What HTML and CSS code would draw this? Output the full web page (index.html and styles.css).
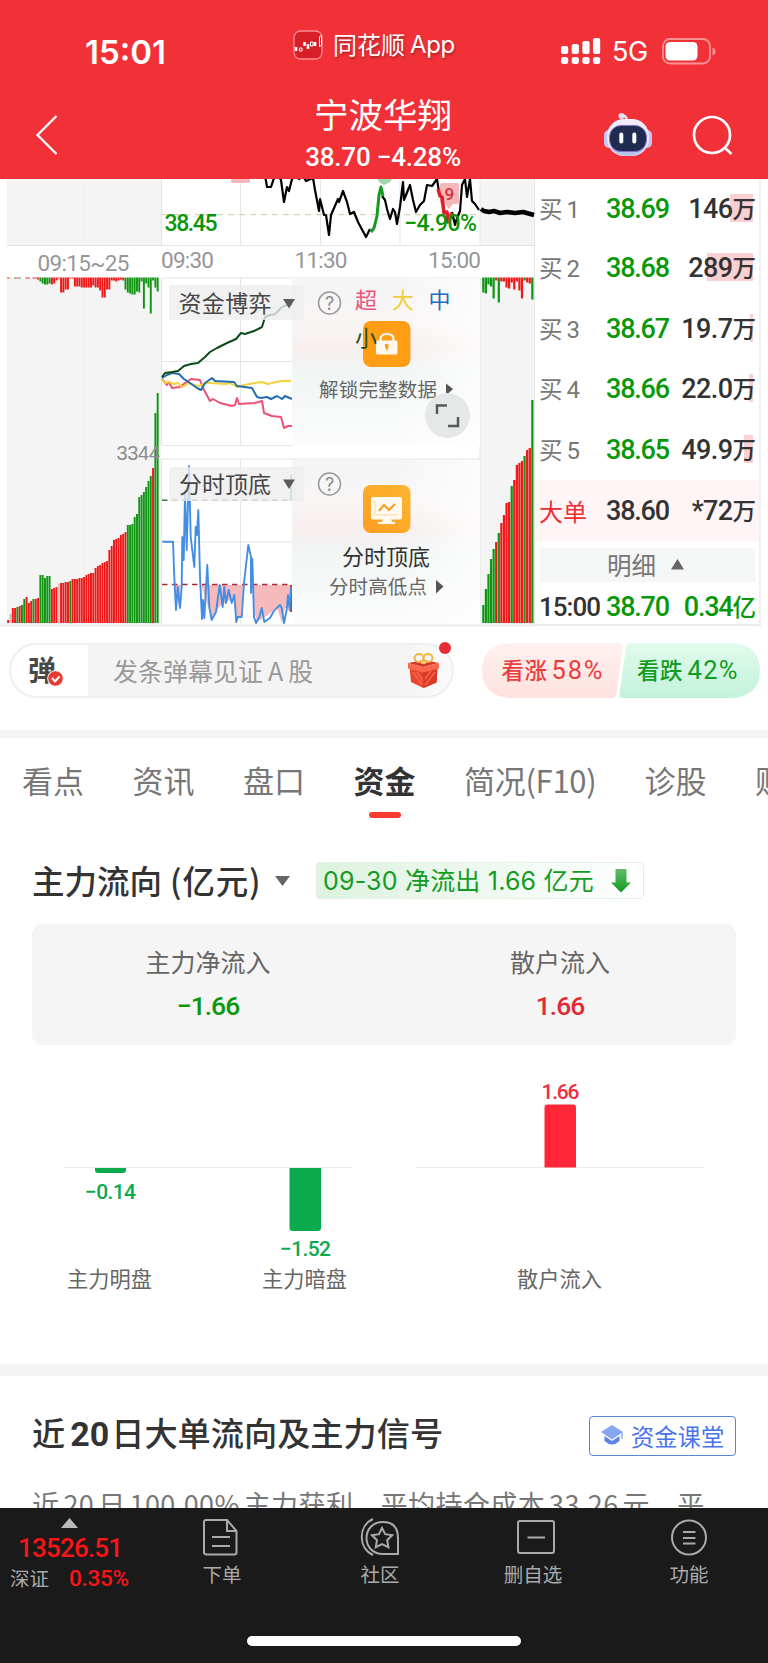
FILE: index.html
```html
<!DOCTYPE html>
<html lang="zh-CN">
<head>
<meta charset="utf-8">
<title>宁波华翔</title>
<link rel="stylesheet" href="styles.css">
</head>
<body>
<header class="top">
  <div class="status">
    <span class="clock">15:01</span>
    <span class="app">
      <svg width="31" height="30" viewBox="0 0 31 30"><rect x="1" y="1" width="28" height="28" rx="6.500" fill="#d81f28" stroke="#ff8f90" stroke-width="1.300"/><path d="M3 17v4M11.500 12v4M15 14v5M22 12v4" stroke="#fff" stroke-width="2.600"/><path d="M6.500 18h2.500v3H6.500zM17.500 12h2.500v4h-2.500zM26.500 17V7q1.500-3 2 0v8z" fill="none" stroke="#fff" stroke-width="1"/></svg>
      <span class="app-name">同花顺<i>App</i></span>
    </span>
    <span class="net">
      <svg width="40" height="29" viewBox="0 0 40 29" fill="#fff"><rect x="0" y="9" width="7.200" height="8" rx="2"/><rect x="10.700" y="7" width="7.200" height="10" rx="2"/><rect x="21.400" y="4" width="7.200" height="13" rx="2"/><rect x="32" y="1" width="7.200" height="16" rx="2"/><rect x="0" y="20" width="7.200" height="7" rx="2.500"/><rect x="10.700" y="20" width="7.200" height="7" rx="2.500"/><rect x="21.400" y="20" width="7.200" height="7" rx="2.500"/><rect x="32" y="20" width="7.200" height="7" rx="2.500"/></svg>
      <span class="g5">5G</span>
      <svg width="54" height="27" viewBox="0 0 54 27"><rect x="1" y="1" width="47" height="24.500" rx="7" fill="none" stroke="#ff9296" stroke-width="1.800"/><rect x="3.500" y="4" width="32" height="18.500" rx="4.500" fill="#fff"/><path d="M50.500 9.500q3 1 3 4t-3 4z" fill="#ff9296"/></svg>
    </span>
  </div>
  <div class="nav">
    <svg class="back" width="24" height="42" viewBox="0 0 24 42"><path d="M21.500 2L2.500 21l19 19" fill="none" stroke="#fff" stroke-width="2.300"/></svg>
    <div class="stock"><h1>宁波华翔</h1><p>38.70 −4.28%</p></div>
    <div class="nav-icons">
      <svg width="50" height="46" viewBox="0 0 50 46">
        <path d="M24 8q-1-5-5-4" fill="none" stroke="#f1eefb" stroke-width="2.500"/><circle cx="18.500" cy="4" r="3" fill="#dfe4f4"/>
        <rect x="1" y="18" width="10" height="18" rx="5" fill="#c5c4f2"/><rect x="39" y="18" width="10" height="18" rx="5" fill="#c5c4f2"/>
        <rect x="4" y="7" width="42" height="37" rx="17" fill="#efedfc"/><path d="M6 34q18 11 38 0-6 10-19 10T6 34z" fill="#b8c3ed"/>
        <rect x="6.500" y="13.500" width="37" height="26" rx="11.500" fill="#202b52" stroke="#8073c8" stroke-width="1"/>
        <path d="M18.300 22.500v7M31.300 22.500v7" stroke="#fff" stroke-width="4" stroke-linecap="round"/>
      </svg>
      <svg width="42" height="42" viewBox="0 0 42 42" fill="none" stroke="#fff" stroke-width="2.700"><circle cx="20" cy="20" r="18"/><path d="M32.500 32.500l7 6.500"/></svg>
    </div>
  </div>
</header>

<main>
<section class="quote">
  <svg class="chart" width="535" height="450" viewBox="0 179 535 450">
    <defs>
      <linearGradient id="haze" x1="0" y1="0" x2="0" y2="1"><stop offset="0" stop-color="#f5f5f5"/><stop offset=".28" stop-color="#f9f5f5"/><stop offset=".42" stop-color="#f7eeee"/><stop offset=".55" stop-color="#f1f5f4"/><stop offset="1" stop-color="#fcfcfd"/></linearGradient>
      <linearGradient id="amber" x1="0" y1="1" x2="1" y2="0"><stop offset="0" stop-color="#ff9d22"/><stop offset="1" stop-color="#fbb632"/></linearGradient>
      <linearGradient id="fade"><stop offset="0" stop-color="#fff" stop-opacity="0"/><stop offset="1" stop-color="#fff" stop-opacity=".7"/></linearGradient>
    </defs>
    <path d="M7 179h154v66H7zM7 278h154v346H7zM480 179h54v66h-54zM480 278h54v346h-54z" fill="#f4f4f5"/>
    <path d="M161.500 179v66M161.500 278v167M161.500 459v165M240.500 179v66M240.500 278v167M240.500 459v165M320.500 179v66M400 179v66M480 179v66M480 278v346M534.500 179v447M7 245.500h528M162 278h318M162 361.500h131M162 445.500h319M162 459h319M162 542h131" fill="none" stroke="#e4e5e5"/>
    <path d="M84.500 179v66M84.500 278v345" stroke="#efeff0"/>
    <path d="M162 214.700h318" stroke="#cdc8a2" stroke-dasharray="6 5"/>
    <path d="M231 179h19v2q0 2-2 2h-15q-2 0-2-2z" fill="#f7b6ba"/>
    <path d="M378 179h14l-2 3-6 3-5-3z" fill="#9fd5a8"/>
    <path d="M440 185q0-2 2-2h15q2 0 2 2v17q0 2-2 2h-4l-4 5-4-5h-3q-2 0-2-2z" fill="#f5b7b9"/>
    <g fill="none" stroke-linejoin="round" stroke-width="2.200">
      <path stroke="#000" d="M265 176l1 5 1 6h4l3-9 4-3 3 5 3 22 3-15 2 4 3-12 5-4 2 4 4-3 3 5 7-3 2 12 4 21 1-12 4 16h2l3 20 2-20 7-16 1 3 4-11 4 11 3 12 4-2 4 10 8 15 4-8M382 196l3 4 2 9 3 10 3-10 2 3 2 12 3-17 3-25 1 18 4-10 2-5 3 15 3 12 4-7 4-4 3-16 5 1 5-7 2 13M452 212l3 13 2-7 3-7 2-26 3-6 2 18 3-18 2 22 3 3 4 6"/>
      <path stroke="#149b20" stroke-width="3" d="M371 232l3-4 3-12 2-21 2-8 2 9"/><path stroke="#df2027" stroke-width="3.500" d="M438 189l2 7 2 1 2 16 3-1 1 10 4-9"/>
      <path stroke="#000" stroke-width="4.500" d="M481 209l3 2 5 1 5-1 6 2 7-1 8 1 8-1 11 3"/>
    </g>
    <g class="din green"><text x="164.500" y="231" textLength="53">38.45</text><text x="404" y="231" textLength="73">−4.90%</text></g>
    <text class="mark" x="444.500" y="199.500">9</text>
    <g class="din time"><text x="37.500" y="270.500" textLength="92">09:15~25</text><text x="161" y="268" textLength="53">09:30</text><text x="294.500" y="268" textLength="53">11:30</text><text x="428" y="268" textLength="53">15:00</text></g>
    <g id="bars"></g>
    <text class="vol" x="116.500" y="460" textLength="43.500">3344</text>

    <g fill="none" stroke-width="2" stroke-linejoin="round">
      <path stroke="#ec5276" d="M162 379l5 6 2-3 3 6 8-1 5-4 6-4 9 1 3 8 7 13 3-2 7 4 12 3 3-1 2-7 2 6 16-1 7-2 2 12 8 3 9 1 3 11 4-2h4"/>
      <path stroke="#f3d13f" d="M162 379l3 4 4-1 5 2 4-1 4 4 7-4 5 2 5 1 7-3h4l16 1 4-1 7 4 7-2 11-2 7-1 6 2 8-2 6-1h9"/>
      <path stroke="#256cad" d="M162 378l5-3 5-2 7 1 5 5 6 4 7 5 4 2 4-7 7-5 3 3 19 1 3 4 15 2 5 9 4 1 6-1 4 2 6-3 5 3 3-3 7 3"/>
      <path stroke="#0b4b16" d="M162 377l3-4 7-1 6-1 6-5 7-2 7-1 7-6 5-5 7-4 10-5 9-4 5-6 4 1 9-3 8-4 3-10 5-2 5-1 7-7 5-2h5"/>
    </g>
    <rect x="292" y="278" width="188" height="168" fill="url(#haze)"/><rect x="292" y="460" width="188" height="164" fill="url(#haze)"/>
    <path d="M393 278h87v168h-87zM393 460h87v164h-87z" fill="url(#fade)"/>
    <g>
      <path d="M162 500.200h130" stroke="#397e43" stroke-width="1.500" stroke-dasharray="5.500 4.500"/><path d="M291 475v26" stroke="#59b666" stroke-width="2"/>
      <path d="M175 585h6l-2 22zM201 585h42l-2 31-5 3-1-22-14 8-4 5-5 9zM253 585h39v23l-7 0-3 15-5-15-12 9-8 5-3-12z" fill="#f6babb"/>
      <path d="M162 584.500h130" stroke="#ad2835" stroke-width="1.700" stroke-dasharray="5.500 4.500"/><path d="M291 585v27" stroke="#cf343d" stroke-width="2"/>
      <path fill="none" stroke="#438ee5" stroke-width="1.900" stroke-linejoin="round" d="M162.300 541.700H173L174.300 577 176 610 177.700 587 180 608 181.700 587 182.300 537 183.700 560 185 493 186.700 550 189 466 190.700 537 194.300 567 195.700 527 197 535 198.300 510 200 577 202 619 203 600 204.300 618 207.300 565 209.300 607 211.700 620 216 612 219.700 585 222.700 607 224.300 587 226 603 228.700 590 231.700 603 234.300 595 236.300 622 237.700 617h4L244 583 248.300 545 251 557V593L252.300 559 254 617 256 623 259.300 617 261.700 608 264.300 622 270 618 273.300 612 276.700 608 280 605 281.700 608 284 623 286.700 610 288 595 289.700 610 291 587"/>
    </g>
    <g fill="#eeedef" fill-opacity=".8"><rect x="169" y="285" width="135" height="35" rx="2"/><rect x="169" y="467" width="135" height="34" rx="2"/></g>
    <g class="cjk label"><text x="178.500" y="311.500" textLength="93">资金博弈</text><text x="179" y="493" textLength="92">分时顶底</text></g>
    <path d="M283 299h12l-6 9.500zM283 479.500h12l-6 9.500z" fill="#5c5c5c"/>
    <g fill="none" stroke="#999" stroke-width="1.500"><circle cx="329.500" cy="303" r="11"/><circle cx="329.500" cy="484" r="11"/></g>
    <g class="help"><text x="329.500" y="309.500">?</text><text x="329.500" y="490.500">?</text></g>
    <g class="cjk series"><text x="355" y="307.500" fill="#ed527b">超</text><text x="392" y="307.500" fill="#efcf35">大</text><text x="428.500" y="307.500" fill="#256dbb">中</text></g>
    <rect x="363" y="321" width="47.500" height="46" rx="8" fill="#ff9e15"/>
    <path d="M380.500 342v-3q0-5 6.500-5t6.500 5v3" fill="none" stroke="#fff8ed" stroke-width="2.200"/><rect x="376" y="340.500" width="21.500" height="14" rx="1.500" fill="#fff8ed"/><path d="M385 344h3.500v3l-1.500 4-2-4z" fill="#ff9e15"/>
    <g class="cjk series"><text x="355" y="345.500" fill="#245018">小</text></g>
    <g class="cjk sub"><text x="319" y="397" textLength="118">解锁完整数据</text><text x="329" y="593.500" textLength="98">分时高低点</text></g>
    <text class="cjk name" x="342" y="564.500" textLength="88">分时顶底</text>
    <path d="M446 383.500l7 5.500-7 6.500zM436 580l7.500 6.500-7.500 7z" fill="#555"/>
    <circle cx="447.500" cy="415.500" r="22.500" fill="#e6e8e8"/><path d="M437 414v-8.500h10M458 417v9h-10" fill="none" stroke="#58595a" stroke-width="2.500"/>
    <rect x="363" y="485" width="47.500" height="48" rx="8" fill="url(#amber)"/><rect x="371" y="497" width="31" height="22.500" rx="2" fill="#fffaf0"/><path d="M383 519h8l1 3h3v2h-17v-2h4z" fill="#fffaf0"/><path d="M375 501v14h22" fill="none" stroke="#ffd99a"/><path d="M379 511l5-6 5 5 6-6" fill="none" stroke="#f99c20" stroke-width="2"/>
    <path d="M0 625.500h535" stroke="#e9ebec" stroke-width="2"/>
  </svg>
  <div class="book">
    <div class="order"><span>买<b>1</b></span><strong>38.69</strong><em><i style="width:23px"></i>146<small>万</small></em></div>
    <div class="order"><span>买<b>2</b></span><strong>38.68</strong><em><i style="width:46px"></i>289<small>万</small></em></div>
    <div class="order"><span>买<b>3</b></span><strong>38.67</strong><em><i style="width:3px"></i>19.7<small>万</small></em></div>
    <div class="order"><span>买<b>4</b></span><strong>38.66</strong><em><i style="width:4px"></i>22.0<small>万</small></em></div>
    <div class="order"><span>买<b>5</b></span><strong>38.65</strong><em><i style="width:9px"></i>49.9<small>万</small></em></div>
    <div class="order big"><span>大单</span><strong>38.60</strong><em>*72<small>万</small></em></div>
    <div class="detail">明细<svg width="13" height="11" viewBox="0 0 13 11"><path d="M6.500 0L13 10.500H0z" fill="#666"/></svg></div>
    <div class="order last"><span>15:00</span><strong>38.70</strong><em>0.34<small>亿</small></em></div>
  </div>
</section>

<section class="talk">
  <div class="input"><span class="bullet">弹<svg width="17" height="17" viewBox="0 0 17 17"><circle cx="8.500" cy="8.500" r="7.800" fill="#e73a30" stroke="#fff"/><path d="M5 8l3 3.500 4.500-5" fill="none" stroke="#fff" stroke-width="2"/></svg></span><span class="ph">发条弹幕见证<i>A</i>股</span>
    <svg class="gift" width="34" height="37" viewBox="0 0 34 37"><path d="M2.500 15l13.500 4 14.500-4-1 15.500L16.500 36 4 30z" fill="#e8452f"/><path d="M16 19l14.500-4-1 15.500L16.500 36z" fill="#d93a28"/><path d="M6 20l9 13M10 20l6 9M18 33l10-13M18 27l6-8" stroke="#f4674e" stroke-width="1.400"/><path d="M1 11l16-3 15 3-16 4z" fill="#d2392a"/><path d="M1 11l15 4 16-4v5.500l-16 4-15-4z" fill="#f9674c"/><g fill="none" stroke="#f3b548" stroke-width="2"><ellipse cx="12" cy="6" rx="4.500" ry="4"/><ellipse cx="21" cy="6" rx="4.500" ry="4"/></g><path d="M14 10.500h5" stroke="#f9d57c" stroke-width="2.500"/></svg>
    <span class="dot"></span></div>
  <div class="votes">
    <svg width="278" height="56" viewBox="0 0 278 56"><defs><linearGradient id="up" x2="0" y2="1"><stop stop-color="#fff1ef"/><stop offset="1" stop-color="#fde2df"/></linearGradient><linearGradient id="down" x2="0" y2="1"><stop stop-color="#e1fbed"/><stop offset="1" stop-color="#c3f2da"/></linearGradient></defs>
    <path d="M28 0h109q4 0 3.500 4l-6 47q-.500 4-4.500 4H28Q0 53 0 27.500T28 0z" fill="url(#up)"/><path d="M149 0h101q28 2 28 27.500T250 55H141q-4 0-3.500-4l6.500-47q.500-4 5-4z" fill="url(#down)"/>
    <g class="cjk vote"><text x="19.500" y="36" fill="#eb3d3d" textLength="45.500">看涨</text><text class="pct" x="69.500" y="36" fill="#eb3d3d" textLength="51">58%</text><text x="155" y="36" fill="#149b24" textLength="45.500">看跌</text><text class="pct" x="205.500" y="36" fill="#149b24" textLength="50">42%</text></g></svg>
  </div>
</section>

<nav class="tabs"><a>看点</a><a>资讯</a><a>盘口</a><a class="on">资金</a><a class="wide">简况(F10)</a><a>诊股</a><a>财务</a></nav>

<section class="flow">
  <div class="flow-head"><h2>主力流向<span>(亿元)</span></h2><svg width="15" height="10" viewBox="0 0 15 10"><path d="M0 0h15L7.500 10z" fill="#666"/></svg>
    <div class="tag">09-30 净流出 1.66 亿元<svg width="20" height="25" viewBox="0 0 20 25"><defs><linearGradient id="arr" x2="0" y2="1"><stop stop-color="#62bd68"/><stop offset="1" stop-color="#119b20"/></linearGradient></defs><path d="M4.500 1h11v13.500H20L10 24.500 0 14.500h4.500z" fill="url(#arr)"/></svg></div></div>
  <div class="sums"><div><span>主力净流入</span><b class="neg">−1.66</b></div><div><span>散户流入</span><b class="pos">1.66</b></div></div>
  <svg class="flow-chart" width="768" height="319" viewBox="0 1045 768 319">
    <path d="M63 1167.500h289M416 1167.500h288" stroke="#ececec"/>
    <path d="M95 1168h31v2q0 3-3 3H98q-3 0-3-3zM289.500 1168H321v60q0 3-3 3h-25.500q-3 0-3-3z" fill="#0aaa4d"/><path d="M544.500 1167.500v-60q0-3 3-3H573q3 0 3 3v60z" fill="#ff2638"/>
    <g class="din values"><text x="85" y="1199" textLength="51" fill="#0aaa4d">−0.14</text><text x="280" y="1256" textLength="51" fill="#0aaa4d">−1.52</text><text x="541.500" y="1098.500" textLength="38" fill="#f32b40">1.66</text></g>
    <g class="cjk cats"><text x="109.500" y="1287">主力明盘</text><text x="304.500" y="1287">主力暗盘</text><text x="559.500" y="1287">散户流入</text></g>
  </svg>
</section>

<section class="signal">
  <div class="signal-head"><h2>近<b>20</b>日大单流向及主力信号</h2><a><svg width="22" height="21" viewBox="0 0 22 21"><path d="M11 0l11 7-11 7.500L0 7z" fill="#86a5f2"/><path d="M3.500 11v5q7.500 7 15 0v-5L11 16z" fill="#5e83e8"/><path d="M21 7v7" stroke="#86a5f2" stroke-width="1.400"/></svg>资金课堂</a></div>
  <p>近<b>20</b>日<b>100.00%</b>主力获利，平均持仓成本<b>33.26</b>元，平</p>
</section>
</main>

<footer class="dock">
  <div class="dock-row">
    <div class="index"><svg width="17" height="10" viewBox="0 0 17 10"><path d="M8.500 0L17 10H0z" fill="#b9b9b9"/></svg><strong>13526.51</strong><div><span>深证</span><b>0.35%</b></div></div>
    <div class="item first"><svg width="40" height="40" viewBox="0 0 40 40"><path d="M5 3h21l9.500 11v21.500q0 2-2 2H6q-3 0-3-2V5q0-2 2-2zM26 3v11h9M11 20h18M11 29h18"/></svg><span>下单</span></div>
    <div class="item"><svg width="42" height="40" viewBox="0 0 42 40"><path d="M14 2C-1 9-1 31 14 38M39 37H24C2 37 2 5 24 5q15 0 15 16z"/><path d="M23 11l3.200 6.200 7 1-5 5 1.200 7-6.400-3.200-6.200 3.200 1.200-7-5-5 7-1z"/></svg><span>社区</span></div>
    <div class="item del"><svg width="40" height="40" viewBox="0 0 40 40"><rect x="2" y="4" width="36" height="32" rx="2"/><path d="M11.500 20.500h17.500"/></svg><span>删自选</span></div>
    <div class="item"><svg width="40" height="40" viewBox="0 0 40 40"><circle cx="20" cy="20.500" r="17"/><path d="M14 15h12.500M14 21h12.500M14 26.500h12.500"/></svg><span>功能</span></div>
  </div>
  <div class="home"></div>
</footer>
<script src="charts.js"></script>
</body>
</html>
```
FILE: styles.css
```css
* { box-sizing: border-box; }
body { margin: 0; width: 768px; height: 1663px; overflow: hidden; background: #fff; color: #333; font-family: Roboto, "Noto Sans CJK SC", sans-serif; display: flex; flex-direction: column; }
h1, h2, p { margin: 0; font-weight: 400; }
i, em { font-style: normal; }
svg { display: block; flex: none; }
.cjk { font-family: "Noto Sans CJK SC", sans-serif; }
.din { font-family: Roboto, sans-serif; }

.top { height: 179px; flex: none; background: #f13037; color: #fff; }
.status { height: 90px; padding: 30px 52px 0 85px; display: grid; grid-template-columns: 208px 1fr 155px; align-items: start; }
.clock { font: 600 33px/44px Inter, sans-serif; }
.app { display: flex; gap: 9px; }
.app-name { font: 400 24px/29px "Noto Sans CJK SC", sans-serif; text-shadow: 1px 2px 2px #70202688; display: flex; gap: 5px; margin-top: -1px; }
.app-name i { font: 400 24px/31px Inter, sans-serif; letter-spacing: -.4px; }
.net { display: flex; align-items: center; padding-top: 7px; gap: 14px; }
.g5 { width: 36px; font: 400 27px/28px Inter, sans-serif; letter-spacing: -.3px; margin: 1px 0 0 -3px; }
.nav { display: grid; grid-template-columns: 232px 232px 1fr; padding-left: 35px; height: 89px; }
.back { margin-top: 24px; }
.stock { text-align: center; }
.stock h1 { font: 400 34.500px/44px "Noto Sans CJK SC", sans-serif; padding-top: 1px; }
.stock p { font: 500 26px/30px Roboto, sans-serif; letter-spacing: -.2px; padding-top: 7px; }
.nav-icons { display: flex; align-items: start; gap: 39px; padding: 22px 0 0 104px; }
.nav-icons svg + svg { margin-top: 3px; }

main { flex: 1; min-height: 0; overflow: hidden; }
.quote { height: 450px; display: flex; overflow: hidden; }
.green { fill: #0b9609; font-size: 23px; font-weight: 500; }
.time { fill: #969699; font-size: 22.500px; }
.mark { font: 500 17px Roboto, sans-serif; fill: #dc3038; }
.vol { font: 20px "Liberation Sans", sans-serif; fill: #8c8c8c; }
.label { font-size: 23px; fill: #454545; }
.help { font: 18px Inter, sans-serif; fill: #8c8c8c; text-anchor: middle; }
.series { font-size: 22px; }
.sub { font-size: 19.500px; fill: #666; }
.name { font-size: 22px; fill: #333; }
.book { width: 226px; height: 447px; border-right: 2px solid #efefef; border-bottom: 2px solid #e9ebec; }
.order { height: 60.600px; padding: 0 3px 0 4px; display: grid; grid-template-columns: 67px 64px 1fr; align-items: center; font-size: 27px; line-height: 32px; white-space: nowrap; }
.order:first-child { height: 59px; }
.order span { font: 23.500px/30px "Noto Sans CJK SC", sans-serif; color: #777; }
.order b { font: 400 24px/30px Roboto, sans-serif; margin-left: 4px; }
.order strong { font-weight: 500; color: #0a980b; letter-spacing: -1.200px; }
.order em { position: relative; text-align: right; font-weight: 500; letter-spacing: -.6px; }
.order em i { position: absolute; right: 3px; top: 1px; height: 28px; background: #fad0d2; z-index: -1; }
.order small { font: 500 23.500px/28px "Noto Sans CJK SC", sans-serif; letter-spacing: 0; }
.order.big { background: #fff5f6; }
.order.big span { color: #ee2e35; font-size: 24px; }
.order.big strong { color: #333; }
.detail { height: 34px; margin: 7px 4px 0 5px; padding-left: 67px; background: #f5f6f6; display: flex; align-items: center; gap: 15px; font: 24.500px/34px "Noto Sans CJK SC", sans-serif; color: #777; }
.order.last { height: 43px; padding-top: 8px; }
.last span { font: 500 26px/30px Roboto, sans-serif; letter-spacing: -1px; color: #333; }
.last em { color: #0a980b; letter-spacing: -1.200px; }

.talk { height: 101px; padding: 14px 8px 0 9px; display: flex; justify-content: space-between; }
.input { position: relative; width: 445px; height: 55px; border: 2px solid #eeefef; border-radius: 28px; background: linear-gradient(90deg, #fff 77px, #f4f4f4 77px 88%, #fafafc); display: flex; align-items: center; }
.bullet { position: relative; width: 102px; padding-left: 17px; font: 700 28px/44px "Noto Sans CJK SC", sans-serif; color: #484848; margin-top: -3px; }
.bullet svg { position: absolute; left: 36px; top: 23px; }
.ph { font: 400 25px/40px "Noto Sans CJK SC", sans-serif; color: #999; width: 294px; white-space: nowrap; margin-top: -2px; }
.ph i { margin: 0 5px; }
.gift { margin-bottom: 1px; }
.dot { position: absolute; right: 1px; top: -3px; width: 12px; height: 12px; border-radius: 50%; background: #e82c33; }
.vote { font-size: 22.500px; font-weight: 500; }
.pct { font: 400 25.500px Roboto, sans-serif; }

.tabs { height: 117px; border-top: 8px solid #f4f4f4; padding: 19px 0 0 22px; display: flex; gap: 48.500px; white-space: nowrap; overflow: hidden; font: 400 31px/46px "Noto Sans CJK SC", sans-serif; color: #777; }
.tabs a { height: 68px; flex: none; }
.tabs .on { font-weight: 700; color: #333; display: flex; flex-direction: column; align-items: center; }
.tabs .on::after { content: ""; width: 32px; height: 6px; border-radius: 3px; background: #f63c30; margin-top: 9px; }
.tabs .wide { width: 132px; letter-spacing: -.3px; }

.flow-head { height: 77px; display: flex; align-items: center; padding: 0 0 10px 32px; }
.flow-head h2 { font: 500 32.500px/46px "Noto Sans CJK SC", sans-serif; width: 243px; white-space: nowrap; margin-top: -2px; }
.flow-head h2 span { margin-left: 8px; letter-spacing: .8px; }
.tag { margin-left: 26px; width: 328px; height: 37px; padding: 0 12px 0 6px; border: 1px solid #e4f1e5; border-radius: 3px; background: linear-gradient(90deg, #ddf2df, #fff); display: flex; align-items: center; justify-content: space-between; font: 400 25px/32px Inter, "Noto Sans CJK SC", sans-serif; letter-spacing: .2px; color: #149b24; white-space: nowrap; }
.sums { margin: 0 32px; height: 121px; border-radius: 10px; background: #f5f5f5; display: grid; grid-template-columns: 1fr 1fr; text-align: center; }
.sums div { display: flex; flex-direction: column; padding-top: 19px; }
.sums span { font: 400 25px/36px "Noto Sans CJK SC", sans-serif; color: #666; }
.sums b { font: 500 26.500px/34px Roboto, sans-serif; margin-top: 10px; letter-spacing: -1px; }
.neg { color: #0a980b; }
.pos { color: #e02c35; }
.values { font-size: 21px; font-weight: 500; }
.cats { font-size: 21.200px; text-anchor: middle; fill: #666; }

.signal { border-top: 12px solid #f4f4f4; padding-left: 32px; }
.signal-head { padding-top: 39px; display: flex; justify-content: space-between; margin-right: 32px; align-items: center; height: 80px; }
.signal h2 { font: 500 33.200px/46px "Noto Sans CJK SC", sans-serif; white-space: nowrap; margin-top: -6px; }
.signal h2 b { font: 700 34px/46px Roboto, sans-serif; margin: 0 2px 0 5px; }
.signal a { width: 147px; height: 40px; padding-left: 11px; border: 1.500px solid #5885d9; border-radius: 4px; display: flex; align-items: center; gap: 8px; color: #4972ec; font: 400 23.300px/36px "Noto Sans CJK SC", sans-serif; }
.signal p { font: 400 27px/38px "Noto Sans CJK SC", sans-serif; color: #777; white-space: nowrap; margin-top: 29px; letter-spacing: .4px; }
.signal p b { font-weight: 400; margin: 0 4px; }

.dock { height: 155px; flex: none; background: #1a1a1a; color: #aaa; }
.dock-row { height: 128px; display: grid; grid-template-columns: 144px 156px 160px 146px 166px; }
.item { display: flex; flex-direction: column; align-items: center; font: 400 19.500px/28px "Noto Sans CJK SC", sans-serif; padding-top: 9px; gap: 3px; }
.item svg { fill: none; stroke: #aaa; stroke-width: 2; }
.item.first svg { margin-left: -3px; }
.item.del svg { margin-left: 5px; }
.index { padding: 10px 0 0 18px; color: #f81418; }
.index svg { margin-left: 43px; }
.index strong { display: block; font: 500 26px/32px Roboto, sans-serif; margin-top: 4px; letter-spacing: -.8px; }
.index div { display: flex; margin-left: -8px; gap: 20px; line-height: 28px; }
.index span { color: #aaa; font: 400 19.500px/28px "Noto Sans CJK SC", sans-serif; }
.index b { font: 500 22.500px/28px Roboto, sans-serif; letter-spacing: -.3px; }
.home { width: 274px; height: 10px; border-radius: 5px; background: #fff; margin: 0 auto; }
```
FILE: charts.js
```js
const layer = document.getElementById('bars');
const colors = { r: '#ef1717', g: '#119614', p: '#d5bcbc' };

// Each entry is a height in pixels followed by a colour key.
function drawBars(data, x, pitch, base, dir) {
  data.trim().split(/\s+/).forEach((entry, i) => {
    const h = parseFloat(entry);
    if (!h) return;
    const rect = document.createElementNS('http://www.w3.org/2000/svg', 'rect');
    rect.setAttribute('x', (x + i * pitch).toFixed(2));
    rect.setAttribute('y', dir > 0 ? base : base - h);
    rect.setAttribute('width', pitch - 0.35);
    rect.setAttribute('height', h);
    rect.setAttribute('fill', colors[entry.slice(-1)]);
    layer.appendChild(rect);
  });
}

drawBars(`3r 9p 15r 15r 16g 17r 18g 24g 26r 20r 22r 24g 24r 25r 48g 48g 45g 47g 47g 34r 35r 36r 39p 40r 40r 41r 41r 42g 44r 44r 44r 45r 45r 46r 48r 49r 50r 50r
55r 57r 58r 60r 61r 62r 73r 77r 83r 84r 85r 88r 89r 91r 98g 98g 99g 106g 109g 126g 128g 131g 136g 142g 147g 155r 210g 230g`, 7.2, 2.3, 623, -1);
drawBars(`1r 1p 0 1g 1r 1g 0 0 1r 1r 0 1r 1r 2r 4g 6g 7g 7g 6g 7r 6r 3r 1r 15r 15r 12r 12r 1r 1r 9r 9r 9r 10r 10r 10r 10r 10r 8r 10r 10r 13r 20r 20r 12r 12r 3r 3r 4r 3r 2r 3r
12g 15g 16g 17g 17g 14g 15g 4g 31g 6g 10g 36g 3g 10g 14g`, 7.2, 2.3, 277.5, 1);
drawBars('18g 34g 49g 64g 74g 81r 90g 100r 108r 120r 121r 137g 143r 158r 160r 162r 167g 173r 175r 223g', 482.2, 2.58, 623, -1);
drawBars('15g 16g 7g 9g 21g 3r 25g 4r 4r 10r 11r 5r 12r 4r 13r 21r 3g 5r 6r 22g', 482.2, 2.58, 277.5, 1);
```
